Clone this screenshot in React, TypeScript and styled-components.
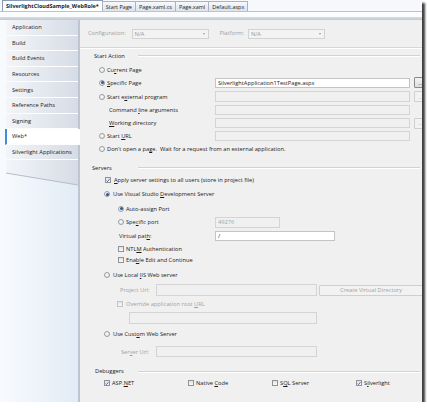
import React from 'react';
import styled, { createGlobalStyle, css } from 'styled-components';

const GlobalStyle = createGlobalStyle`
  body {
    margin: 0;
    background: #ffffff;
  }
  * {
    box-sizing: border-box;
  }
`;

const Frame = styled.div`
  width: 422px;
  height: 402px;
  display: flex;
  flex-direction: column;
  font-family: 'Open Sans', 'Liberation Sans', sans-serif;
  font-size: 5.7px;
  color: #1b1b1b;
  background: #f6f8fb;
  box-shadow: 3px 3px 2px rgba(30, 30, 30, 0.85);
  overflow: hidden;
`;

const TabStrip = styled.div`
  height: 12px;
  display: flex;
  align-items: flex-end;
  padding-left: 2px;
  background: #f6f8fb;
  border-bottom: 1px solid #a9c8e8;
  flex: none;
`;

const Tab = styled.div<{ $active?: boolean }>`
  height: ${({ $active }) => ($active ? 11 : 10)}px;
  padding: 0 3px;
  display: flex;
  align-items: center;
  white-space: nowrap;
  border: 1px solid ${({ $active }) => ($active ? '#8799b6' : '#aab3c2')};
  border-bottom: none;
  margin-right: -1px;
  font-size: 5.5px;
  background: ${({ $active }) => ($active ? '#ffffff' : 'linear-gradient(#f7f9fc, #dde3ec)')};
  font-weight: ${({ $active }) => ($active ? 700 : 400)};
`;

const TabGap = styled.div`
  height: 5px;
  background: #fbfcfe;
  flex: none;
`;

const TabBand = styled.div`
  height: 3px;
  background: linear-gradient(#d9dde3, #c3c8d0);
  flex: none;
`;

const Body = styled.div`
  flex: 1;
  display: flex;
  min-height: 0;
`;

const Sidebar = styled.div`
  width: 78px;
  flex: none;
  display: flex;
  flex-direction: column;
  background: linear-gradient(to right, #f8fbfe, #e2ebf6);
`;

const NavList = styled.div`
  margin-left: 6px;
  width: 72px;
  display: flex;
  flex-direction: column;
  background: linear-gradient(to right, #f3f5f8, #d6dce6);
  padding-bottom: 0;
`;

const NavItem = styled.div<{ $selected?: boolean }>`
  height: 15.6px;
  display: flex;
  align-items: center;
  padding-left: 6px;
  white-space: nowrap;
  border-bottom: 1px solid #fdfdfe;
  ${({ $selected }) =>
    $selected &&
    css`
      position: relative;
      z-index: 1;
      margin-right: -2px;
      margin-left: -1px;
      padding-left: 5px;
      background: #ffffff;
      border-left: 2px solid #3d8ee0;
    `}
`;

const NavTail = styled.svg`
  display: block;
  margin-left: 6px;
  width: 72px;
  height: 26px;
`;

const Panel = styled.div`
  flex: 1;
  display: flex;
  flex-direction: column;
  background: #f0f0f0;
  border-left: 2px solid #bcc5d1;
  overflow: hidden;
`;

const ConfigRow = styled.div`
  height: 28px;
  flex: none;
  display: flex;
  align-items: flex-start;
  padding: 9px 0 0 8px;
  border-bottom: 1px solid #d6d6d6;
  box-shadow: 0 1px 0 #ffffff;
  white-space: nowrap;
`;

const Row = styled.div<{ $h: number; $pl?: number; $mt?: number }>`
  height: ${({ $h }) => $h}px;
  margin-top: ${({ $mt }) => $mt ?? 0}px;
  padding-left: ${({ $pl }) => $pl ?? 0}px;
  flex: none;
  display: flex;
  align-items: center;
  white-space: nowrap;
`;

const HeaderText = styled.span`
  width: 44px;
  flex: none;
`;

const HeaderLine = styled.div`
  flex: 1;
  height: 1px;
  margin-right: 2px;
  background: #d2d2d2;
  box-shadow: 0 1px 0 #ffffff;
`;

const Text = styled.span<{ $dim?: boolean; $w?: number }>`
  color: ${({ $dim }) => ($dim ? '#a2a2a2' : 'inherit')};
  width: ${({ $w }) => ($w ? `${$w}px` : 'auto')};
  flex: none;
`;

const Option = styled.label<{ $w?: number; $gap?: number }>`
  display: flex;
  align-items: center;
  gap: ${({ $gap }) => $gap ?? 2}px;
  width: ${({ $w }) => ($w ? `${$w}px` : 'auto')};
  flex: none;
`;

const Radio = styled.span<{ $on?: boolean }>`
  width: 6px;
  height: 6px;
  border-radius: 50%;
  border: 1px solid #9a9ea2;
  background: radial-gradient(circle at 40% 40%, #ffffff, #d8d8d8);
  display: flex;
  align-items: center;
  justify-content: center;
  flex: none;
  ${({ $on }) =>
    $on &&
    css`
      &::after {
        content: '';
        width: 3px;
        height: 3px;
        border-radius: 50%;
        background: #27579f;
      }
    `}
`;

const Box = styled.span<{ $dim?: boolean }>`
  width: 6px;
  height: 6px;
  border: 1px solid ${({ $dim }) => ($dim ? '#c4c4c4' : '#8f9396')};
  background: linear-gradient(#e2e2e2, #fafafa);
  display: flex;
  align-items: center;
  justify-content: center;
  flex: none;
`;

const TextBox = styled.div<{ $w?: number; $white?: boolean; $h?: number }>`
  height: ${({ $h }) => $h ?? 10.5}px;
  width: ${({ $w }) => ($w ? `${$w}px` : 'auto')};
  flex: ${({ $w }) => ($w ? 'none' : '1')};
  border: 1px solid ${({ $white }) => ($white ? '#c2c4c8' : '#d4d4d4')};
  background: ${({ $white }) => ($white ? '#ffffff' : '#f0f0f0')};
  color: ${({ $white }) => ($white ? '#1b1b1b' : '#a2a2a2')};
  display: flex;
  align-items: center;
  padding-left: 2px;
  overflow: hidden;
`;

const Button = styled.div<{ $w: number; $on?: boolean; $ml?: number }>`
  height: 11px;
  width: ${({ $w }) => $w}px;
  margin-left: ${({ $ml }) => $ml ?? 4}px;
  flex: none;
  display: flex;
  align-items: center;
  justify-content: center;
  border: 1px solid ${({ $on }) => ($on ? '#8a8a8a' : '#cfcfcf')};
  border-radius: 1px;
  background: ${({ $on }) => ($on ? 'linear-gradient(#f4f4f4, #dcdcdc)' : '#f2f2f2')};
  color: ${({ $on }) => ($on ? '#1b1b1b' : '#a2a2a2')};
`;

const Combo = styled.div`
  width: 77px;
  height: 10px;
  flex: none;
  display: flex;
  align-items: center;
  justify-content: space-between;
  padding: 0 3px 0 2px;
  border: 1px solid #d2d2d2;
  background: #f3f3f3;
  color: #9a9a9a;
`;

const Arrow = styled.span`
  width: 0;
  height: 0;
  border-left: 1.5px solid transparent;
  border-right: 1.5px solid transparent;
  border-top: 2px solid #9a9a9a;
`;

const DebugCell = styled.div`
  width: 84px;
  flex: none;
`;

const Key = styled.u`
  text-decoration-thickness: 0.5px;
  text-underline-offset: 0.5px;
`;

const Check: React.FC<{ dim?: boolean }> = ({ dim }) => (
  <svg width="5" height="5" viewBox="0 0 5 5">
    <path d="M0.7 2.6 L1.9 3.9 L4.3 0.8" fill="none" stroke={dim ? '#9aa6c8' : '#2546a0'} strokeWidth="1" />
  </svg>
);

const CheckBox: React.FC<{ on?: boolean; dim?: boolean }> = ({ on, dim }) => (
  <Box $dim={dim}>{on && <Check dim={dim} />}</Box>
);

const navItems = [
  'Application',
  'Build',
  'Build Events',
  'Resources',
  'Settings',
  'Reference Paths',
  'Signing',
  'Web*',
  'Silverlight Applications',
];

const tabs = ['SilverlightCloudSample_WebRole*', 'Start Page', 'Page.xaml.cs', 'Page.xaml', 'Default.aspx'];

export default function App() {
  return (
    <>
      <GlobalStyle />
      <Frame>
        <TabStrip>
          {tabs.map((t, i) => (
            <Tab key={t} $active={i === 0}>
              {t}
            </Tab>
          ))}
        </TabStrip>
        <TabGap />
        <TabBand />
        <Body>
          <Sidebar>
            <NavList>
              {navItems.map((n) => (
                <NavItem key={n} $selected={n === 'Web*'}>
                  {n}
                </NavItem>
              ))}
            </NavList>
            <NavTail viewBox="0 0 72 26">
              <defs>
                <linearGradient id="tail" x1="0" x2="1" y1="0" y2="0">
                  <stop offset="0" stopColor="#f3f5f8" />
                  <stop offset="1" stopColor="#d6dce6" />
                </linearGradient>
              </defs>
              <polygon points="0,0 72,0 72,25 0,13" fill="url(#tail)" />
              <line x1="0" y1="13" x2="72" y2="25" stroke="#b3bdcb" strokeWidth="1" />
            </NavTail>
          </Sidebar>

          <Panel>
            <ConfigRow>
              <Text $dim $w={43.5}>Configuration:</Text>
              <Combo>
                N/A
                <Arrow />
              </Combo>
              <Text $dim $w={28.5} style={{ marginLeft: 11 }}>
                Platform:
              </Text>
              <Combo>
                N/A
                <Arrow />
              </Combo>
            </ConfigRow>

            <Row $h={15} $pl={14}>
              <HeaderText>Start Action</HeaderText>
              <HeaderLine />
            </Row>
            <Row $h={13} $pl={19}>
              <Option>
                <Radio />
                <span>
                  Cu<Key>r</Key>rent Page
                </span>
              </Option>
            </Row>
            <Row $h={13.5} $pl={19}>
              <Option $w={116}>
                <Radio $on />
                <span>
                  <Key>S</Key>pecific Page
                </span>
              </Option>
              <TextBox $w={195} $white>
                SilverlightApplication1TestPage.aspx
              </TextBox>
              <Button $w={14} $on>
                ...
              </Button>
            </Row>
            <Row $h={14} $pl={19}>
              <Option $w={116}>
                <Radio />
                <span>
                  Start e<Key>x</Key>ternal program
                </span>
              </Option>
              <TextBox $w={195} />
              <Button $w={14}>...</Button>
            </Row>
            <Row $h={13} $pl={29}>
              <Text $w={106}>
                Command <Key>l</Key>ine arguments
              </Text>
              <TextBox $w={195} />
            </Row>
            <Row $h={13} $pl={29}>
              <Text $w={106}>
                <Key>W</Key>orking directory
              </Text>
              <TextBox $w={195} />
              <Button $w={14}>...</Button>
            </Row>
            <Row $h={13} $pl={19}>
              <Option $w={116}>
                <Radio />
                <span>
                  Start <Key>U</Key>RL
                </span>
              </Option>
              <TextBox $w={195} />
            </Row>
            <Row $h={13} $pl={19}>
              <Option>
                <Radio />
                <span>
                  Don't open a pa<Key>g</Key>e.&nbsp; Wait for a request from an external application.
                </span>
              </Option>
            </Row>

            <Row $h={13} $mt={5.5} $pl={12}>
              <HeaderText style={{ width: 46 }}>Servers</HeaderText>
              <HeaderLine />
            </Row>
            <Row $h={12.5} $pl={25}>
              <Option $gap={3}>
                <CheckBox on />
                <span>
                  <Key>A</Key>pply server settings to all users (store in project file)
                </span>
              </Option>
            </Row>
            <Row $h={15} $pl={24}>
              <Option $gap={3}>
                <Radio $on />
                <span>
                  Use Visual Studio <Key>D</Key>evelopment Server
                </span>
              </Option>
            </Row>
            <Row $h={14} $pl={38}>
              <Option>
                <Radio $on />
                <span>
                  Auto-assi<Key>g</Key>n Port
                </span>
              </Option>
            </Row>
            <Row $h={13.5} $pl={38}>
              <Option $w={97}>
                <Radio />
                <span>
                  Spe<Key>c</Key>ific port
                </span>
              </Option>
              <TextBox $w={65} $h={11}>
                49276
              </TextBox>
            </Row>
            <Row $h={14} $pl={39}>
              <Text $w={96}>
                Virtual pat<Key>h</Key>:
              </Text>
              <TextBox $w={120} $white>
                /
              </TextBox>
            </Row>
            <Row $h={12} $pl={38}>
              <Option>
                <CheckBox />
                <span>
                  NTL<Key>M</Key> Authentication
                </span>
              </Option>
            </Row>
            <Row $h={9} $pl={38}>
              <Option>
                <CheckBox />
                <span>
                  Ena<Key>b</Key>le Edit and Continue
                </span>
              </Option>
            </Row>
            <Row $h={12} $mt={5} $pl={24}>
              <Option $gap={3}>
                <Radio />
                <span>
                  Use Local <Key>I</Key>IS Web server
                </span>
              </Option>
            </Row>
            <Row $h={14} $mt={2} $pl={40}>
              <Text $dim $w={36}>
                Project Url:
              </Text>
              <TextBox $w={161} $h={11.4} />
              <Button $w={104} $ml={2}>
                Create Virtual Directory
              </Button>
            </Row>
            <Row $h={14} $pl={37}>
              <Option $gap={3}>
                <CheckBox dim />
                <Text $dim>
                  Override application root <Key>U</Key>RL
                </Text>
              </Option>
            </Row>
            <Row $h={14} $pl={49}>
              <TextBox $w={188} $h={11.4} />
            </Row>
            <Row $h={12} $mt={3} $pl={24}>
              <Option $gap={3}>
                <Radio />
                <span>
                  Use Cust<Key>o</Key>m Web Server
                </span>
              </Option>
            </Row>
            <Row $h={13} $mt={5} $pl={41}>
              <Text $dim $w={35}>
                Ser<Key>v</Key>er Url:
              </Text>
              <TextBox $w={161} $h={11} />
            </Row>

            <Row $h={14} $mt={6} $pl={15}>
              <HeaderText style={{ width: 43 }}>Debuggers</HeaderText>
              <HeaderLine />
            </Row>
            <Row $h={10} $pl={24}>
              <DebugCell>
                <Option>
                  <CheckBox on />
                  <span>
                    ASP.<Key>N</Key>ET
                  </span>
                </Option>
              </DebugCell>
              <DebugCell>
                <Option>
                  <CheckBox />
                  <span>
                    Native <Key>C</Key>ode
                  </span>
                </Option>
              </DebugCell>
              <DebugCell>
                <Option>
                  <CheckBox />
                  <span>
                    S<Key>Q</Key>L Server
                  </span>
                </Option>
              </DebugCell>
              <DebugCell>
                <Option>
                  <CheckBox on />
                  <span>
                    S<Key>i</Key>lverlight
                  </span>
                </Option>
              </DebugCell>
            </Row>
          </Panel>
        </Body>
      </Frame>
    </>
  );
}
